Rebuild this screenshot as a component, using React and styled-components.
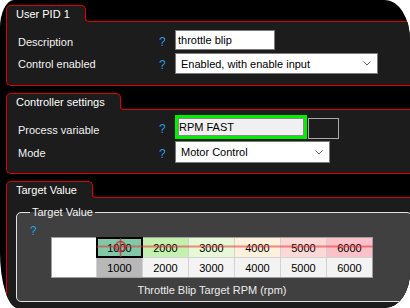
import React from "react";
import styled, { createGlobalStyle } from "styled-components";

const GlobalStyle = createGlobalStyle`
  html, body {
    margin: 0;
    padding: 0;
    background: #fff;
  }
`;

const RED = "#e00000";
const PANEL = "#1c1c1c";

const row1 = [
  { v: "1000", bg: "#80c8a8", active: true },
  { v: "2000", bg: "#c4f0b0" },
  { v: "3000", bg: "#e6f8d6" },
  { v: "4000", bg: "#fdf0dc" },
  { v: "5000", bg: "#fcd8d6" },
  { v: "6000", bg: "#fcc0c8" },
];
const row2 = [
  { v: "1000", bg: "#b8b8b8" },
  { v: "2000", bg: "#f3f3f3" },
  { v: "3000", bg: "#f3f3f3" },
  { v: "4000", bg: "#f3f3f3" },
  { v: "5000", bg: "#f3f3f3" },
  { v: "6000", bg: "#f3f3f3" },
];

const Chevron = () => (
  <svg width="8" height="5" viewBox="0 0 8 5">
    <polyline points="0.5,0.5 4,4 7.5,0.5" fill="none" stroke="#606060" strokeWidth="1" />
  </svg>
);

const App = () => {
  return (
    <Screen>
      <GlobalStyle />

      <Group>
        <TabRow>
          <Tab>User PID 1</Tab>
          <TabLine />
        </TabRow>
        <Panel $pad="8px 0 11px 11px" $gap={3}>
          <Field $h={20}>
            <Label $shift={2}>Description</Label>
            <Help>?</Help>
            <TextBox>throttle blip</TextBox>
          </Field>
          <Field $h={21}>
            <Label $shift={1}>Control enabled</Label>
            <Help>?</Help>
            <Select $w={203}>
              <span>Enabled, with enable input</span>
              <Chevron />
            </Select>
          </Field>
        </Panel>
      </Group>

      <Group>
        <TabRow>
          <Tab>Controller settings</Tab>
          <TabLine />
        </TabRow>
        <Panel $pad="5px 0 10px 11px" $gap={2}>
          <Field $h={24}>
            <Label $shift={3}>Process variable</Label>
            <Help>?</Help>
            <ProcessWrap>
              <GreenBox>RPM FAST</GreenBox>
              <Swatch />
            </ProcessWrap>
          </Field>
          <Field $h={22}>
            <Label $shift={1}>Mode</Label>
            <Help>?</Help>
            <Select $w={155}>
              <span>Motor Control</span>
              <Chevron />
            </Select>
          </Field>
        </Panel>
      </Group>

      <Group>
        <TabRow>
          <Tab>Target Value</Tab>
          <TabLine />
        </TabRow>
        <Panel $pad="8px 0 20px 9px" $gap={0} $open>
          <Fieldset>
            <Legend>Target Value</Legend>
            <InnerHelp>?</InnerHelp>
            <TableWrap>
              <Grid>
                <Corner />
                {row1.map((c, i) => (
                  <Cell key={"a" + i} $bg={c.bg} $active={c.active}>
                    {c.v}
                  </Cell>
                ))}
                {row2.map((c, i) => (
                  <Cell key={"b" + i} $bg={c.bg}>
                    {c.v}
                  </Cell>
                ))}
              </Grid>
              <Overlay width="322" height="41" viewBox="0 0 322 41">
                <line x1="46" y1="9.5" x2="322" y2="9.5" stroke="rgba(232,50,50,0.55)" strokeWidth="2" />
                <line x1="69.5" y1="1" x2="69.5" y2="20" stroke="rgba(200,40,50,0.75)" strokeWidth="1.5" />
                <circle cx="69.5" cy="9.5" r="5" fill="none" stroke="rgba(200,40,50,0.8)" strokeWidth="1.5" />
              </Overlay>
            </TableWrap>
            <Caption>Throttle Blip Target RPM (rpm)</Caption>
          </Fieldset>
        </Panel>
      </Group>
    </Screen>
  );
};

const Screen = styled.div`
  width: 410px;
  height: 308px;
  box-sizing: border-box;
  background: #000;
  overflow: hidden;
  border-radius: 14px 25px 25px 18px / 28px 40px 36px 56px;
  padding: 5px 0 0 6px;
  font-family: "Liberation Sans", Arial, sans-serif;
  font-size: 11px;
  color: #f0f0f0;
`;

// Group: tab + panel
const Group = styled.section`
  margin-right: -40px;
  & + & {
    margin-top: 7px;
  }
`;
const TabRow = styled.div`
  display: flex;
  height: 17px;
`;
const Tab = styled.div`
  box-sizing: border-box;
  height: 17px;
  padding: 2px 15px 0 9px;
  border: 1px solid ${RED};
  border-bottom: none;
  border-radius: 5px 5px 0 0;
  background: ${PANEL};
  color: #fff;
  line-height: 13px;
  white-space: nowrap;
`;
const TabLine = styled.div`
  flex: 1;
  align-self: flex-end;
  height: 8px;
  box-sizing: border-box;
  margin-left: -1px;
  border-left: 1px solid ${RED};
  border-bottom: 1px solid ${RED};
  border-bottom-left-radius: 4px;
  box-shadow: -4px 4px 0 0 ${PANEL};
`;
const Panel = styled.div`
  background: ${PANEL};
  border-left: 1px solid ${RED};
  border-bottom: ${(p) => (p.$open ? "none" : `1px solid ${RED}`)};
  border-bottom-left-radius: 5px;
  padding: ${(p) => p.$pad};
  display: flex;
  flex-direction: column;
  gap: ${(p) => p.$gap}px;
`;

// Fields
const Field = styled.div`
  display: grid;
  grid-template-columns: 141px 16px auto;
  align-items: center;
  height: ${(p) => p.$h}px;
`;
const Label = styled.div`
  padding-top: ${(p) => p.$shift * 2}px;
  line-height: 13px;
  color: #f2f2f2;
  white-space: nowrap;
`;
const Help = styled.div`
  padding-top: 3px;
  font-size: 12px;
  line-height: 14px;
  color: #1e9fe6;
`;
const TextBox = styled.div`
  box-sizing: border-box;
  width: 100px;
  height: 20px;
  padding-left: 2px;
  border: 1px solid #7a7a7a;
  background: #fff;
  color: #000;
  line-height: 18px;
`;
const Select = styled.div`
  box-sizing: border-box;
  width: ${(p) => p.$w}px;
  height: 100%;
  display: flex;
  align-items: center;
  justify-content: space-between;
  padding: 0 6px 0 5px;
  border: 1px solid #7a7a7a;
  background: #fff;
  color: #000;
`;
const ProcessWrap = styled.div`
  display: flex;
  align-items: flex-end;
  height: 24px;
`;
const GreenBox = styled.div`
  box-sizing: border-box;
  width: 132px;
  height: 24px;
  padding-left: 1px;
  border: 3px solid #00f000;
  box-shadow: inset 0 0 0 1px #8a8a8a;
  background: #f0f0f0;
  color: #000;
  line-height: 18px;
`;
const Swatch = styled.div`
  box-sizing: border-box;
  width: 31px;
  height: 21px;
  margin-left: 1px;
  border: 1px solid #a8a8a8;
  background: ${PANEL};
`;

// Target value box
const Fieldset = styled.fieldset`
  margin: 0;
  width: 396px;
  min-inline-size: 0;
  box-sizing: border-box;
  padding: 7px 0 4px;
  border: 1px solid #e2e2e2;
  border-radius: 5px;
  background: #404040;
`;
const Legend = styled.legend`
  margin-left: 13px;
  padding: 0 2px;
  line-height: 13px;
  color: #f4f4f4;
`;
const InnerHelp = styled.div`
  margin-left: 13px;
  height: 11px;
  font-size: 12px;
  line-height: 11px;
  color: #1e9fe6;
`;
const TableWrap = styled.div`
  position: relative;
  width: 322px;
  margin: 0 auto 0 34px;
`;
const Grid = styled.div`
  display: grid;
  grid-template-columns: 44px repeat(6, 45px);
  grid-template-rows: 19px 19px;
  gap: 1px;
  background: #d2d2d2;
  border: 1px solid #a0a0a0;
`;
const Corner = styled.div`
  grid-row: span 2;
  background: #fff;
`;
const Cell = styled.div`
  display: flex;
  align-items: center;
  justify-content: center;
  background: ${(p) => p.$bg};
  color: #000;
  ${(p) =>
    p.$active &&
    `
    position: relative;
    z-index: 1;
    outline: 2px solid #000;
    outline-offset: -1px;
  `}
`;
const Overlay = styled.svg`
  position: absolute;
  top: 0;
  left: 0;
  z-index: 2;
  pointer-events: none;
`;
const Caption = styled.div`
  width: 322px;
  margin: 6px 0 0 34px;
  text-align: center;
  line-height: 13px;
  color: #ececec;
`;

export default App;
